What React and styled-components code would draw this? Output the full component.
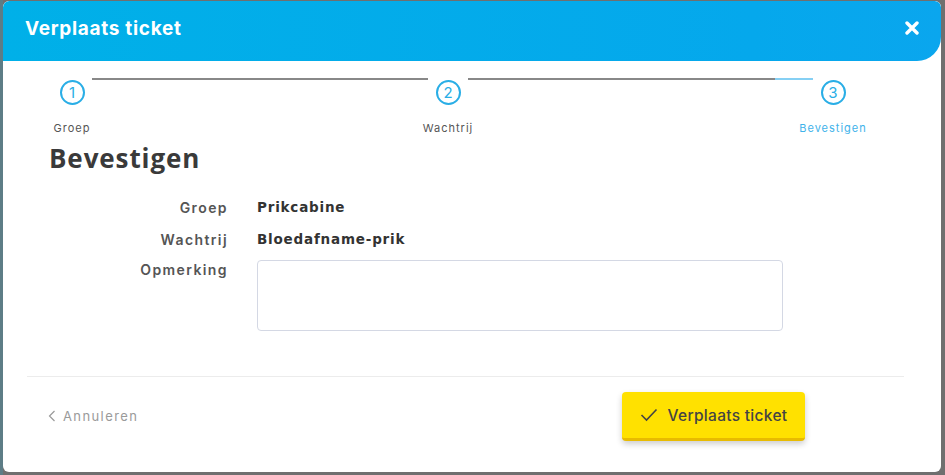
import React from 'react';
import styled, { createGlobalStyle } from 'styled-components';

const GlobalStyle = createGlobalStyle`
  html, body {
    margin: 0;
    padding: 0;
    background: #6f6f6f;
    font-family: Inter, "Open Sans", "Liberation Sans", sans-serif;
  }
  * { box-sizing: border-box; }
`;

const steps = [
  { id: 1, label: 'Groep' },
  { id: 2, label: 'Wachtrij' },
  { id: 3, label: 'Bevestigen', active: true },
];

const fields = [
  { label: 'Groep', value: 'Prikcabine' },
  { label: 'Wachtrij', value: 'Bloedafname-prik' },
];

const App = () => {
  return (
    <Backdrop>
      <GlobalStyle />
      <Modal>
        <Header>
          <Title>Verplaats ticket</Title>
          <CloseButton aria-label="Sluiten">
            <svg width="14" height="14" viewBox="0 0 14 14">
              <path d="M2 2 L12 12 M12 2 L2 12" stroke="#fff" strokeWidth="3.4" strokeLinecap="round" />
            </svg>
          </CloseButton>
        </Header>

        <Stepper>
          {steps.map((step, i) => (
            <React.Fragment key={step.id}>
              <Step>
                <Circle>{step.id}</Circle>
                <StepLabel active={step.active}>{step.label}</StepLabel>
              </Step>
              {i < steps.length - 1 ? <Connector last={i === 1} /> : null}
            </React.Fragment>
          ))}
        </Stepper>

        <Content>
          <Heading>Bevestigen</Heading>
          <Form>
            {fields.map(f => (
              <React.Fragment key={f.label}>
                <FieldLabel>{f.label}</FieldLabel>
                <FieldValue>{f.value}</FieldValue>
              </React.Fragment>
            ))}
            <FieldLabel tight>Opmerking</FieldLabel>
            <Remark />
          </Form>
        </Content>

        <Footer>
          <CancelLink>
            <svg width="8" height="12" viewBox="0 0 8 12">
              <path d="M6.5 1 L1.5 6 L6.5 11" fill="none" stroke="#9a9a9a" strokeWidth="1.2" />
            </svg>
            Annuleren
          </CancelLink>
          <ConfirmButton>
            <svg width="18" height="14" viewBox="0 0 18 14">
              <path d="M1.5 7 L6.5 12 L16.5 1.5" fill="none" stroke="#444" strokeWidth="1.6" />
            </svg>
            Verplaats ticket
          </ConfirmButton>
        </Footer>
      </Modal>
    </Backdrop>
  );
};

export default App;

const Backdrop = styled.div`
  width: 945px;
  height: 475px;
  padding: 1px 4px 3px 3px;
  background: linear-gradient(to right, #5d7d86 0px, #5d7d86 3px, #6f6f6f 3px);
`;

const Modal = styled.div`
  width: 938px;
  height: 471px;
  background: #fff;
  border-radius: 6px;
  display: flex;
  flex-direction: column;
  overflow: hidden;
`;

const Header = styled.div`
  height: 60px;
  flex-shrink: 0;
  display: flex;
  align-items: center;
  justify-content: space-between;
  padding: 0 22px 0 22px;
  background: linear-gradient(to right, #00b0e8, #05a8ec 80%, #0aa6ee);
  border-radius: 6px 6px 24px 0;
`;

const Title = styled.h1`
  margin: 0;
  margin-top: -6px;
  color: #fff;
  font-size: 19px;
  font-weight: 700;
  letter-spacing: 0.7px;
`;

const CloseButton = styled.button`
  border: none;
  background: none;
  padding: 0;
  margin-top: -6px;
  display: flex;
  cursor: pointer;
`;

const Stepper = styled.div`
  display: flex;
  align-items: flex-start;
  padding: 16px 88px 0 49px;
`;

const Step = styled.div`
  width: 40px;
  flex-shrink: 0;
  display: flex;
  flex-direction: column;
  align-items: center;
`;

const Circle = styled.div`
  width: 25px;
  height: 25px;
  margin-top: 3px;
  border: 2px solid #2aaee6;
  border-radius: 50%;
  display: flex;
  align-items: center;
  justify-content: center;
  color: #2aaee6;
  font-size: 15px;
  font-weight: 400;
`;

const StepLabel = styled.div`
  margin-top: 16px;
  white-space: nowrap;
  font-size: 11px;
  letter-spacing: 1px;
  color: ${props => (props.active ? '#3fb3ea' : '#555')};
`;

const Connector = styled.div`
  flex: ${props => (props.last ? '1' : '0 0 336px')};
  height: 2px;
  margin-top: 1px;
  background: ${props =>
    props.last
      ? 'linear-gradient(to right, #888 calc(100% - 38px), #86d0f4 calc(100% - 38px))'
      : '#888'};
`;

const Content = styled.div`
  padding: 5px 0 0 46px;
  flex: 1;
`;

const Heading = styled.h2`
  margin: 0;
  font-family: "Open Sans", Inter, sans-serif;
  font-size: 26px;
  font-weight: 700;
  color: #3a3a3a;
  letter-spacing: 0.9px;
`;

const Form = styled.div`
  display: grid;
  grid-template-columns: 179px 526px;
  column-gap: 29px;
  row-gap: 9px;
  margin-top: 20px;
  align-items: start;
`;

const FieldLabel = styled.div`
  text-align: right;
  font-size: 14px;
  font-weight: 600;
  line-height: ${props => (props.tight ? '19px' : '23px')};
  letter-spacing: 1.4px;
  color: #555;
`;

const FieldValue = styled.div`
  font-family: "DejaVu Sans", Inter, sans-serif;
  font-size: 13.5px;
  font-weight: 700;
  line-height: 23px;
  letter-spacing: 0.8px;
  color: #333;
`;

const Remark = styled.textarea`
  width: 526px;
  height: 71px;
  margin: 0;
  border: 1px solid #d4d8e4;
  border-radius: 4px;
  resize: none;
  font-family: inherit;
`;

const Footer = styled.div`
  margin: 0 37px 0 24px;
  height: 96px;
  border-top: 1px solid #ececec;
  display: flex;
  align-items: flex-start;
  justify-content: space-between;
  padding: 15px 99px 0 21px;
`;

const CancelLink = styled.a`
  display: flex;
  align-items: center;
  gap: 7px;
  margin-top: 16px;
  font-size: 13px;
  letter-spacing: 1.4px;
  color: #9a9a9a;
  cursor: pointer;
`;

const ConfirmButton = styled.button`
  width: 183px;
  height: 49px;
  border: none;
  border-bottom: 3px solid #e8bb00;
  border-radius: 4px;
  background: #ffe100;
  box-shadow: 0 3px 6px rgba(0, 0, 0, 0.2);
  display: flex;
  align-items: center;
  justify-content: center;
  gap: 10px;
  font-family: Inter, sans-serif;
  font-size: 15.5px;
  font-weight: 500;
  color: #444;
  letter-spacing: 0.3px;
  cursor: pointer;
`;
